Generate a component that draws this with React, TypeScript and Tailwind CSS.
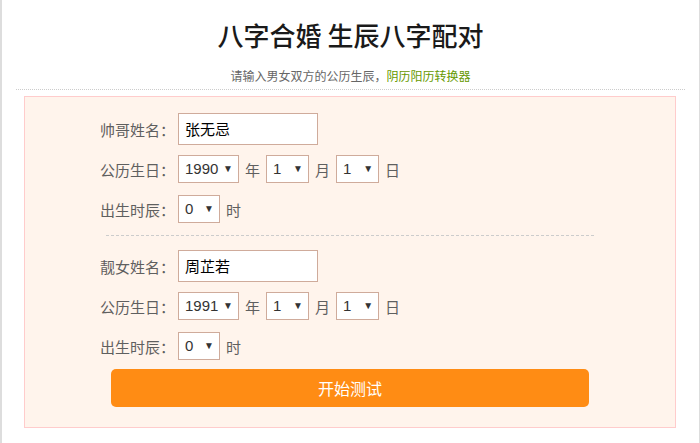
import React from "react";

const font = { fontFamily: '"Microsoft YaHei", "Noto Sans CJK SC", "Noto Sans", sans-serif' };

function Sel({ value, w }: { value: string; w: string }) {
  return (
    <div
      className={`${w} h-[28px] border border-[#cfab9b] bg-white flex items-center justify-between pl-[6px] pr-[5px] text-[15px] text-[#333]`}
      style={{ fontFamily: '"Liberation Sans", Arial, sans-serif' }}
    >
      <span>{value}</span>
      <span className="text-[10px] text-[#333] leading-none">▼</span>
    </div>
  );
}

function Label({ text }: { text: string }) {
  return <div className="w-[78px] text-[15px] text-[#5f5f5f] leading-none">{text}</div>;
}

function Unit({ text }: { text: string }) {
  return <div className="mx-[6px] text-[15px] text-[#5f5f5f] leading-none">{text}</div>;
}

function Person({ title, name, year }: { title: string; name: string; year: string }) {
  return (
    <>
      <div className="flex items-center">
        <Label text={title} />
        <div className="w-[140px] h-[32px] border border-[#cfab9b] bg-white flex items-center pl-[6px] text-[15px] text-black">
          {name}
        </div>
      </div>
      <div className="flex items-center mt-[10px]">
        <Label text="公历生日：" />
        <Sel value={year} w="w-[61px]" />
        <Unit text="年" />
        <Sel value="1" w="w-[43px]" />
        <Unit text="月" />
        <Sel value="1" w="w-[43px]" />
        <Unit text="日" />
      </div>
      <div className="flex items-center mt-[12px]">
        <Label text="出生时辰：" />
        <Sel value="0" w="w-[42px]" />
        <Unit text="时" />
      </div>
    </>
  );
}

export default function App() {
  return (
    <div className="w-[700px] h-[443px] bg-white border-l-2 border-r border-[#ddd] overflow-hidden" style={font}>
      <div className="pt-[17px] h-[36px] box-content text-center text-[26px] leading-[36px] font-medium text-[#1a1a1a]">
        八字合婚 生辰八字配对
      </div>
      <div className="mt-[13px] h-[20px] text-center text-[12px] leading-[20px] text-[#666]">
        请输入男女双方的公历生辰，<span className="text-[#669900]">阴历阳历转换器</span>
      </div>
      <div className="mx-[14px] mt-[3px] border-b border-dotted border-[#ccc]" />
      <div className="ml-[22px] mt-[6px] w-[652px] h-[332px] border border-[#fcc] bg-[#fff4ec]">
        <div className="pt-[16px] pl-[75px]">
          <Person title="帅哥姓名：" name="张无忌" year="1990" />
        </div>
        <div className="mx-[81px] mt-[12px] border-b border-dashed border-[#ccc]" />
        <div className="pt-[14px] pl-[75px]">
          <Person title="靓女姓名：" name="周芷若" year="1991" />
        </div>
        <div className="mt-[9px] mx-[86px] h-[38px] rounded-[5px] bg-[#ff8c14] flex items-center justify-center text-white text-[16px]">
          开始测试
        </div>
      </div>
    </div>
  );
}
